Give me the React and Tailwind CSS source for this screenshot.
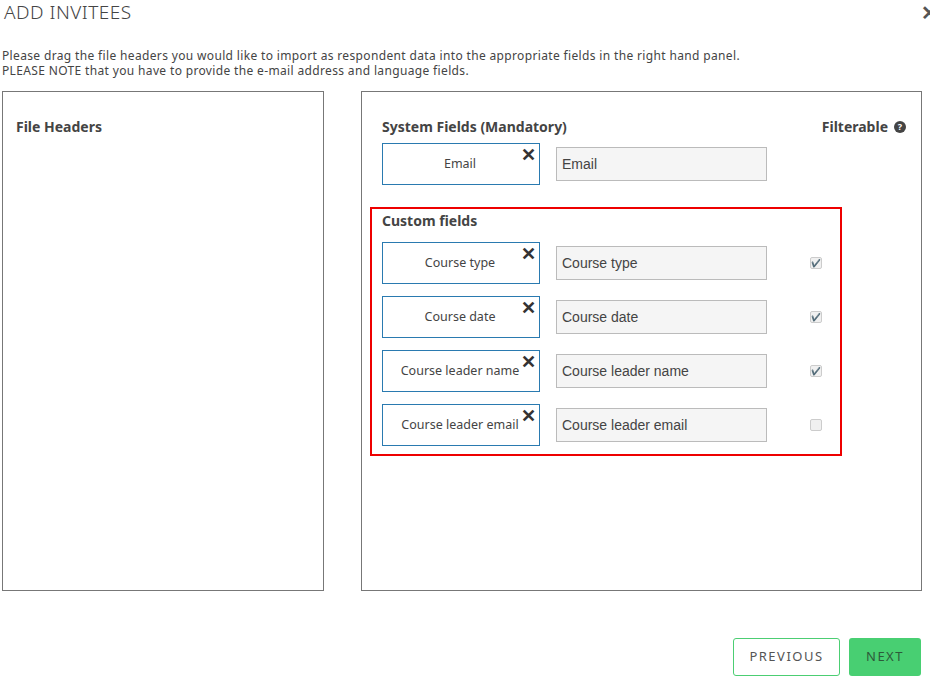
import React from "react";

const rows = [
  { name: "Course type", checked: true },
  { name: "Course date", checked: true },
  { name: "Course leader name", checked: true },
  { name: "Course leader email", checked: false },
];

function Chip({ label }) {
  return (
    <div className="relative w-[158px] h-[42px] border border-[#2a7ab0] bg-white flex items-center justify-center text-[12.5px] text-[#444]">
      <span className="pr-[2px]">{label}</span>
      <span className="absolute top-[1px] right-[3px] text-[18px] leading-none font-bold text-[#333]">✕</span>
    </div>
  );
}

function Field({ label }) {
  return (
    <div className="w-[211px] h-[34px] ml-[16px] border border-[#bbb] bg-[#f5f5f5] flex items-center px-[5px] text-[14px] text-[#444] font-[family-name:Liberation_Sans,Arial,sans-serif]">
      {label}
    </div>
  );
}

export default function App() {
  return (
    <div className="w-[930px] h-[682px] bg-white overflow-hidden font-['Open_Sans',sans-serif] text-[#333]">
      <div className="flex justify-between items-start pl-[4px]">
        <h1 className="text-[19px] font-light tracking-[0.5px] text-[#444] -mt-[2px]">ADD INVITEES</h1>
        <span className="text-[20px] font-bold text-[#555] -mr-[8px] -mt-[2px]">✕</span>
      </div>
      <div className="pl-[2px] mt-[20px] text-[12px] leading-[15px] tracking-[0.35px] text-[#444]">
        <p>Please drag the file headers you would like to import as respondent data into the appropriate fields in the right hand panel.</p>
        <p>PLEASE NOTE that you have to provide the e-mail address and language fields.</p>
      </div>
      <div className="flex ml-[2px] mt-[13px] gap-[37px]">
        <div className="w-[322px] h-[500px] border border-[#777] px-[13px] pt-[24px]">
          <h2 className="text-[14px] font-bold text-[#444]">File Headers</h2>
        </div>
        <div className="w-[561px] h-[500px] border border-[#777] pt-[24px]">
          <div className="flex justify-between pl-[20px] pr-[15px]">
            <h2 className="text-[14px] font-bold text-[#444]">System Fields (Mandatory)</h2>
            <div className="flex items-center gap-[6px] text-[14px] font-bold text-[#444]">
              Filterable
              <span className="w-[12px] h-[12px] rounded-full bg-[#444] text-white text-[9px] flex items-center justify-center">?</span>
            </div>
          </div>
          <div className="flex items-center pl-[20px] mt-[6px]">
            <Chip label="Email" />
            <Field label="Email" />
          </div>
          <div className="ml-[8px] mt-[22px] w-[472px] border-2 border-[#e00] pl-[10px] pt-[1px] pb-[8px]">
            <h3 className="text-[14px] font-bold text-[#444]">Custom fields</h3>
            <div className="flex flex-col gap-[12px] mt-[11px]">
              {rows.map((r) => (
                <div key={r.name} className="flex items-center">
                  <Chip label={r.name} />
                  <Field label={r.name} />
                  <span className="ml-[43px] w-[12px] h-[12px] border border-[#ccc] rounded-[2px] bg-[#f0f0f0] text-[8px] leading-[10px] text-[#aaa] flex items-center justify-center">
                    {r.checked ? "✔" : ""}
                  </span>
                </div>
              ))}
            </div>
          </div>
        </div>
      </div>
      <div className="flex justify-end gap-[9px] mr-[9px] mt-[47px]">
        <button className="w-[107px] h-[38px] border border-[#4cce73] rounded-[3px] bg-white text-[13px] tracking-[1.5px] text-[#555]">PREVIOUS</button>
        <button className="w-[72px] h-[38px] rounded-[3px] bg-[#48cf72] text-[13px] tracking-[1.5px] text-[#2d5a3a]">NEXT</button>
      </div>
    </div>
  );
}
